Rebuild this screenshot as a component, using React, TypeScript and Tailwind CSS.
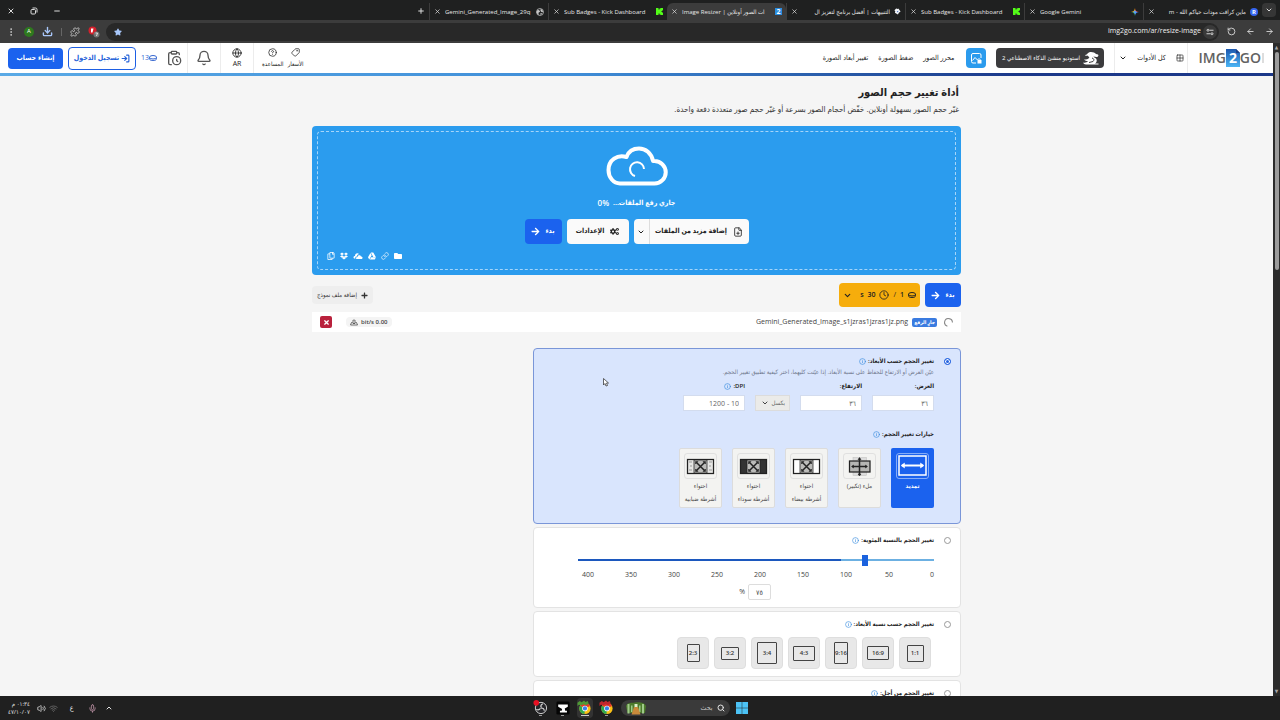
import React from 'react';
import {
  ArrowLeft,
  ArrowRight,
  Bell,
  ChevronDown,
  ChevronUp,
  CircleHelp,
  ClipboardClock,
  Clock,
  Download,
  EllipsisVertical,
  FilePlus,
  Globe,
  Grid2x2,
  Info,
  Link,
  LogIn,
  Mic,
  Minus,
  Plus,
  Puzzle,
  RotateCw,
  Search,
  Tag,
  Volume2,
  Wifi,
  X,
} from 'lucide-react';
import {
  FaArrowRight,
  FaCogs,
  FaDropbox,
  FaFolder,
  FaGoogleDrive,
  FaPlus,
  FaRegCopy,
  FaStar,
  FaTimes,
} from 'react-icons/fa';

/* ---------- small drawings ---------- */

const KickIcon = () => (
  <svg viewBox="0 0 14 14" className="size-[7px]" fill="#53fc18">
    <path d="M0 0h5v3h2V1h2V0h5v5h-2v1h-1v2h1v1h2v5H9v-1H7v-2H5v3H0z" />
  </svg>
);

const GeminiIcon = () => (
  <svg viewBox="0 0 16 16" className="size-2">
    <path d="M8 0c.7 5 2 7 8 8H8z" fill="#ea4335" />
    <path d="M16 8c-6 1-7 3-8 8V8z" fill="#4285f4" />
    <path d="M8 16C7 11 6 9 0 8h8z" fill="#34a853" />
    <path d="M0 8c6-1 7-3 8-8v8z" fill="#fbbc04" />
    <circle cx="8" cy="8" r="3" fill="#5b9cf5" />
  </svg>
);

const RIcon = () => (
  <span className="grid size-2 place-items-center rounded-full bg-[#3565f0] text-[6px] font-bold leading-none text-white">R</span>
);

const TwoIcon = () => (
  <span className="grid size-[7px] place-items-center bg-[#2b8de0] text-[7px] font-bold leading-none text-white">2</span>
);

const BoltIcon = () => (
  <svg viewBox="0 0 16 16" className="size-[7px]">
    <path d="M5 1l4 1 1-1 5 7-4 3-2 4-7-4 1-3-2-3z" fill="#f2f4f8" />
    <path d="M6 8l4-2-1 4z" fill="#3f68b8" />
  </svg>
);

const GlobeDisc = () => (
  <svg viewBox="0 0 16 16" className="size-2">
    <circle cx="8" cy="8" r="7" fill="none" stroke="#c6c6c6" strokeWidth="1.500" />
    <path d="M3 4c3 0 5 1 5 3s-3 1-3 3 1 3 0 4C2 12 1 9 1 8zM9 2c3 0 5 3 5 6-3 1-4-1-5-2s1-2 0-4zM9 10c2 0 3 1 3 2l-3 2z" fill="#c6c6c6" />
  </svg>
);

const CloudIcon = () => (
  <svg viewBox="0 0 62 40" className="h-10 w-[62px]" fill="none" stroke="#fff">
    <path d="M14 37.500h34.500a11 11 0 0 0 0-22.500h-1.500C45.500 7 39.500 2.500 33 2.500c-6 0-10.500 3-12.500 8.500-9-3-18 3-18 13 0 7.500 5 13.500 11.500 13.500z" strokeWidth="4" strokeLinejoin="round" />
    <path d="M38 23a7 7 0 1 0-9 7" strokeWidth="2" />
  </svg>
);

const SpinnerIcon = () => (
  <svg viewBox="0 0 16 16" className="size-[9px]" fill="none" stroke="#8a8a8a" strokeWidth="2">
    <path d="M15 8A7 7 0 1 0 6 14.700" />
  </svg>
);

const CoinIcon = () => (
  <svg viewBox="0 0 16 12" className="h-[6px] w-2" fill="none" stroke="currentColor" strokeWidth="2">
    <ellipse cx="8" cy="4.500" rx="7" ry="3.500" />
    <path d="M1 4.500v3C1 12.500 15 12.500 15 7.500v-3" />
  </svg>
);

const DinoIcon = () => (
  <svg viewBox="0 0 32 26" className="h-[13px] w-4 shrink-0" fill="#fff">
    <path d="M12 1c4-2 12 0 14 3l4 1c2 2 0 5-3 5l-6-1c0 2 3 2 5 4 3 4 1 8-2 10h7v2H6c-3 0-5-2-6-4 4 1 8 0 10-3-3 0-6-1-8-3 5 0 8 0 10-3 2-2-2-3-3-5-2 1-4 1-5-1 4 0 5-4 8-5z" />
    <path d="M18 12c4 1 5 4 2 7l-8 2" fill="none" stroke="#3c3c3c" strokeWidth="2" />
  </svg>
);

const EditorIcon = () => (
  <svg viewBox="0 0 22 22" className="size-[11px]" fill="none" stroke="#fff" strokeWidth="2">
    <path d="M10 20H4a3 3 0 0 1-3-3V4a3 3 0 0 1 3-3h13a3 3 0 0 1 3 3v6" />
    <path d="M3 15l5-6 5 5 3-3 3 3" />
    <rect x="13" y="14" width="8" height="7" fill="#fff" stroke="none" />
  </svg>
);

const OnedriveIcon = () => (
  <svg viewBox="0 0 20 12" className="h-[6px] w-[10px]" fill="currentColor">
    <path d="M1 9C1 7 2 6 4 6c0-4 3-6 6-5 1 0 2 1 3 2-3-1-5 1-5 4-3 0-4 2-3 4H3c-1 0-2-1-2-2z" />
    <path d="M7 12c-2-1-1-4 2-4 0-4 6-5 7-1 4 0 4 5 1 5z" />
  </svg>
);

const WeightIcon = () => (
  <svg viewBox="0 0 16 14" className="h-[7px] w-2" fill="none" stroke="#444" strokeWidth="1.500">
    <path d="M1 12l2-5h2l1 2h4l1-2h2l2 5zM5 5a3 3 0 1 1 6 0M8 4v6" />
  </svg>
);

const PdfIcon = () => (
  <svg viewBox="0 0 24 24" className="size-3">
    <circle cx="9" cy="9" r="8" fill="#d3202c" />
    <path d="M6 5h5l-2 8H6z" fill="#fff" />
    <circle cx="17" cy="17" r="6" fill="#757575" />
    <path d="M15 14h4l-2 6" fill="none" stroke="#fff" strokeWidth="1.500" />
  </svg>
);

const ChromeIcon = ({ hat }: { hat: string }) => (
  <svg viewBox="0 0 32 32" className="size-[15px]">
    <circle cx="17" cy="18" r="12" fill="#fbc116" />
    <path d="M17 18L6.500 12A12 12 0 0 1 28 13z" fill="#e33b2e" />
    <path d="M17 18L6.500 12A12 12 0 0 0 16 30z" fill="#2da94f" />
    <circle cx="17" cy="18" r="6" fill="#fff" />
    <circle cx="17" cy="18" r="4.500" fill="#3b7fea" />
    <path d="M1 6l5-4 4 3 5-4 3 3 5-2 2 6-6 3-5-2-5 2-5-1-3 3z" fill={hat} />
  </svg>
);

const ObsIcon = () => (
  <svg viewBox="0 0 32 32" className="size-[15px]">
    <circle cx="17" cy="17" r="12" fill="#26262a" stroke="#d5d5d5" strokeWidth="2" />
    <path d="M17 16c-1-5 1-7 4-8M17 17c5 0 7 3 7 6M16 18c-3 4-6 4-9 2" fill="none" stroke="#d5d5d5" strokeWidth="2.500" />
    <circle cx="7" cy="6" r="6" fill="#e81123" />
  </svg>
);

const AnvilIcon = () => (
  <svg viewBox="0 0 32 32" className="size-[14px]">
    <rect x="1" y="1" width="30" height="30" rx="3" fill="#050505" />
    <path d="M5 8h22v5l-7 4 1 5h4v4H9v-4h4l1-4-9-5z" fill="#fff" />
  </svg>
);

const BridgeIcon = () => (
  <svg viewBox="0 0 44 28" className="h-[14px] w-[22px]">
    <path d="M2 10C5 2 14 4 20 3s18-2 22 7l-2 14H5z" fill="#4c7a2b" />
    <path d="M5 6h4v19H5zM34 6h4v19h-4zM12 9h3v13h-3zM28 9h3v13h-3z" fill="#9fc98a" />
    <path d="M18 12h8l5 15H13z" fill="#c98a3b" />
    <path d="M19 6h6v6h-6z" fill="#dff0c8" />
  </svg>
);

const WindowsIcon = () => (
  <svg viewBox="0 0 24 24" className="size-3" fill="#4cc2f5">
    <path d="M0 0h11.500v11.500H0zM12.500 0H24v11.500H12.500zM0 12.500h11.500V24H0zM12.500 12.500H24V24H12.500z" />
  </svg>
);

/* ---------- browser chrome ---------- */

interface TabData {
  title: string;
  ltr?: boolean;
  icon: React.ReactNode;
  active?: boolean;
}

const tabs: TabData[] = [
  { title: 'ماين كرافت مودات حياكم الله - m', icon: <RIcon /> },
  { title: 'Google Gemini', ltr: true, icon: <GeminiIcon /> },
  { title: 'Sub Badges - Kick Dashboard', ltr: true, icon: <KickIcon /> },
  { title: 'التنبيهات | أفضل برنامج لتعزيز ال', icon: <BoltIcon /> },
  { title: 'Image Resizer | ات الصور أونلاين', ltr: true, icon: <TwoIcon />, active: true },
  { title: 'Sub Badges - Kick Dashboard', ltr: true, icon: <KickIcon /> },
  { title: 'Gemini_Generated_Image_29q', ltr: true, icon: <GlobeDisc /> },
];

const BrowserTab = ({ title, ltr, icon, active }: TabData) => (
  <div
    className={
      active
        ? 'flex h-[17px] w-[119px] items-center gap-1 rounded-t-md bg-[#3c3c3c] px-1'
        : 'flex h-[17px] w-[119px] items-center gap-1 border-l border-[#3c3c3c] px-1'
    }
  >
    {icon}
    <span dir={ltr ? 'ltr' : 'rtl'} className="min-w-0 flex-1 overflow-hidden whitespace-nowrap text-[6px] leading-3 text-[#e6e6e6]">
      {title}
    </span>
    <button aria-label="إغلاق" className="shrink-0"><X className="size-[7px] text-[#dcdcdc]" strokeWidth={2.5} /></button>
  </div>
);

const TitleBar = () => (
  <div className="flex h-5 shrink-0 items-end bg-[#1f2020] text-[#dcdcdc]">
    <button aria-label="البحث في علامات التبويب" className="mr-1 mb-[3px] grid size-[14px] place-items-center rounded bg-[#363636]">
      <ChevronDown className="size-2" strokeWidth={3} />
    </button>
    <div className="flex">
      {tabs.map((tab, i) => <BrowserTab key={i} {...tab} />)}
    </div>
    <button aria-label="علامة تبويب جديدة" className="mr-1 mb-[5px]"><Plus className="size-2" strokeWidth={3} /></button>
    <div className="mr-auto mb-[5px] ml-[7px] flex gap-[15px]">
      <button aria-label="تصغير"><Minus className="size-2" strokeWidth={3} /></button>
      <button aria-label="استعادة">
        <svg viewBox="0 0 16 16" className="size-2" fill="none" stroke="currentColor" strokeWidth="2">
          <rect x="2" y="5" width="9" height="9" rx="2" />
          <path d="M5 2h6a3 3 0 0 1 3 3v6" />
        </svg>
      </button>
      <button aria-label="إغلاق النافذة"><X className="size-2" strokeWidth={3} /></button>
    </div>
  </div>
);

const Toolbar = () => (
  <div className="flex h-[23px] shrink-0 items-center bg-[#3c3c3c] px-[6px] text-[#d0d0d0]">
    <div className="ml-2 flex gap-[10px]">
      <button aria-label="رجوع"><ArrowRight className="size-[9px]" strokeWidth={2.5} /></button>
      <button aria-label="التالي"><ArrowLeft className="size-[9px]" strokeWidth={2.5} /></button>
      <button aria-label="إعادة تحميل"><RotateCw className="size-[9px] -scale-x-100" strokeWidth={2.5} /></button>
    </div>
    <div className="flex h-[18px] flex-1 items-center rounded-full bg-[#282828] pr-[2px] pl-2">
      <button aria-label="معلومات الموقع" className="grid size-[14px] place-items-center rounded-full bg-[#3a3a3a]">
        <svg viewBox="0 0 16 16" className="size-2" fill="none" stroke="currentColor" strokeWidth="2">
          <circle cx="4" cy="4.500" r="2" />
          <path d="M7 4.500h8M1 11.500h8" />
          <circle cx="12" cy="11.500" r="2" />
        </svg>
      </button>
      <input dir="ltr" aria-label="العنوان" defaultValue="img2go.com/ar/resize-image" className="mr-[2px] min-w-0 flex-1 bg-transparent text-right text-[7px] text-[#f0f0f0] outline-none" />
      <button aria-label="إشارة مرجعية"><FaStar className="size-2 text-[#a8c7fa]" /></button>
    </div>
    <div className="mr-[6px] flex items-center gap-2">
      <button aria-label="PDF"><PdfIcon /></button>
      <button aria-label="الإضافات"><Puzzle className="size-[10px]" /></button>
      <span className="h-2 w-px bg-[#666]" />
      <button aria-label="التنزيلات"><Download className="size-[11px] text-[#a8c7fa]" strokeWidth={3} /></button>
      <button aria-label="الملف الشخصي" className="grid size-[10px] place-items-center rounded-full bg-[#2e7a1e] text-[6px] text-white">A</button>
      <button aria-label="القائمة"><EllipsisVertical className="size-[10px]" /></button>
    </div>
  </div>
);

/* ---------- site ---------- */

const Logo = () => (
  <a href="#" dir="ltr" className="flex items-center text-[14px] leading-none font-semibold text-[#626262]">
    IMG
    <svg viewBox="0 0 28 36" className="h-[18px] w-[14px]">
      <defs>
        <linearGradient id="two" x1="0" y1="0" x2="0" y2="1">
          <stop offset="0" stopColor="#1b57ae" />
          <stop offset="1" stopColor="#4cb5f5" />
        </linearGradient>
      </defs>
      <path d="M0 0h20l8 8v28H0z" fill="url(#two)" />
      <path d="M20 0l8 8h-8z" fill="#1b3f88" />
      <text x="14" y="28" textAnchor="middle" fontSize="28" fontWeight="700" fill="#fff">2</text>
    </svg>
    GO
    <span className="ml-px h-[10px] w-[2px] bg-[#ddd]" />
  </a>
);

const SiteHeader = () => (
  <header className="shrink-0">
    <div className="flex h-[30px] items-center bg-white pr-[9px] pl-2 text-[7px] text-[#222]">
      <Logo />
      <a href="#" className="mr-[10px] flex h-[30px] w-[74px] items-center justify-center gap-[10px] border-x border-[#ececec]">
        <Grid2x2 className="size-2" />
        كل الأدوات
        <ChevronDown className="size-2" strokeWidth={3} />
      </a>
      <button className="mr-[10px] flex h-5 w-[108px] items-center justify-center gap-[3px] rounded-sm bg-[#3b3b3d] text-[6px] font-medium whitespace-nowrap text-white">
        <DinoIcon />
        استوديو منشئ الذكاء الاصطناعي 2
      </button>
      <button aria-label="المحرر" className="mr-[10px] grid size-5 place-items-center rounded-sm bg-[#2b9bed]"><EditorIcon /></button>
      <nav className="mr-3 flex gap-[10px]">
        <a href="#">محرر الصور</a>
        <a href="#">ضغط الصورة</a>
        <a href="#">تغيير أبعاد الصورة</a>
      </nav>
      <div className="mr-auto flex h-[30px] items-center">
        <a href="#" className="flex flex-col items-center gap-[3px] text-[6px] leading-[8px]"><Tag className="size-[9px] scale-x-[-1]" />الأسعار</a>
        <a href="#" className="mr-1 flex flex-col items-center gap-[3px] text-[6px] leading-[8px]"><CircleHelp className="size-[9px]" />المساعدة</a>
        <button className="mr-2 flex h-[30px] w-[34px] flex-col items-center justify-center gap-[2px] border-x border-[#ececec] leading-[8px]"><Globe className="size-[10px]" />AR</button>
        <button aria-label="الإشعارات" className="grid w-8 place-items-center"><Bell className="size-4 text-[#555]" strokeWidth={2} /></button>
        <button aria-label="السجل" className="grid h-[30px] w-[27px] place-items-center border-r border-[#ececec]"><ClipboardClock className="size-4 text-[#555]" strokeWidth={2} /></button>
        <span dir="ltr" className="mr-1 flex items-center text-[7px] text-[#3566cf]">13<CoinIcon /></span>
        <button className="mr-[5px] flex h-[23px] w-[68px] items-center justify-center gap-[2px] rounded-sm border border-[#1d5fe4] font-bold text-[#2461d8]">
          <LogIn className="size-[9px]" strokeWidth={3} />
          تسجيل الدخول
        </button>
        <button className="mr-[5px] h-[21px] w-[55px] rounded-sm bg-[#1b62ee] font-bold text-white">إنشاء حساب</button>
      </div>
    </div>
    <div className="h-[3px] bg-linear-to-r from-[#5aaae6] via-[#3f8ed8] via-45% to-[#1c3889] to-80%" />
  </header>
);

const UploadBox = () => (
  <section className="mt-[9px] rounded bg-[#2b9cee] p-[5px] text-white">
    <div className="flex h-[139px] flex-col items-center rounded-sm border border-dashed border-[#a5d5f9] px-[9px] pt-[14px]">
      <CloudIcon />
      <p className="mt-[9px] flex gap-1 text-[7px] leading-4 font-semibold">جاري رفع الملفات... <span dir="ltr" className="text-[8px]">0%</span></p>
      <div className="mt-2 flex gap-[5px] text-[7px] font-bold text-[#222]">
        <div className="flex h-[25px] rounded-sm bg-[#fafafa]">
          <button className="flex w-[99px] items-center justify-center gap-[6px]">
            <FilePlus className="size-[10px]" />
            إضافة مزيد من الملفات
          </button>
          <button aria-label="مصادر أخرى" className="grid w-4 place-items-center border-r border-[#ddd]"><ChevronDown className="size-2" strokeWidth={3} /></button>
        </div>
        <button className="flex h-[25px] w-[62px] items-center justify-center gap-[6px] rounded-sm bg-[#fafafa]">
          <FaCogs className="size-[9px]" />
          الإعدادات
        </button>
        <button className="flex h-[25px] w-[37px] items-center justify-center gap-[5px] rounded-sm bg-[#1b62ee] text-white">
          بدء
          <FaArrowRight className="size-[9px]" />
        </button>
      </div>
      <div className="mt-2 mr-auto flex items-center gap-[5px]">
        <FaFolder className="size-2" />
        <Link className="size-2" />
        <FaGoogleDrive className="size-2" />
        <OnedriveIcon />
        <FaDropbox className="size-2" />
        <FaRegCopy className="size-2" />
      </div>
    </div>
  </section>
);

const QueueBar = () => (
  <div className="mt-2 flex items-center gap-[5px] text-[7px]">
    <button className="flex h-6 w-9 items-center justify-center gap-[5px] rounded-sm bg-[#1b62ee] text-[7px] font-bold text-white">
      بدء
      <FaArrowRight className="size-[9px]" />
    </button>
    <button className="flex h-6 w-[81px] items-center gap-1 rounded-sm bg-[#f6ad0c] px-1 text-[#222]">
      <CoinIcon />
      <span className="font-semibold">1</span>
      <span>/</span>
      <Clock className="size-[10px]" />
      <span dir="ltr" className="font-semibold whitespace-pre">s  30</span>
      <ChevronDown className="mr-auto size-[9px]" strokeWidth={3} />
    </button>
    <button className="mr-auto flex h-[18px] items-center gap-1 rounded-sm bg-[#eeeeee] px-[5px] text-[6px] text-[#333]">
      <FaPlus className="size-[7px]" />
      إضافة ملف نموذج
    </button>
  </div>
);

const FileRow = () => (
  <div className="mt-[5px] flex h-5 items-center bg-white px-2 text-[7px] text-[#444]">
    <SpinnerIcon />
    <span className="mr-[7px] flex h-[9px] items-center rounded-[2px] bg-[#3a7be0] px-[2px] text-[5px] leading-none font-bold text-white">جارٍ الرفع</span>
    <span dir="ltr" className="mr-1">Gemini_Generated_Image_s1jzras1jzras1jz.png</span>
    <span dir="ltr" className="mr-auto flex h-[10px] items-center gap-[3px] rounded-sm bg-[#f4f4f4] px-1 text-[6px] font-semibold text-[#444]">
      <WeightIcon />
      bit/s 0.00
    </span>
    <button aria-label="حذف" className="mr-[14px] grid size-3 place-items-center rounded-[2px] bg-[#b9213c]"><FaTimes className="size-[7px] text-white" /></button>
  </div>
);

const fitTiles = [
  { lines: ['ملء (تكبير)'], kind: 'fill' },
  { lines: ['احتواء', 'أشرطة بيضاء'], kind: 'white' },
  { lines: ['احتواء', 'أشرطة سوداء'], kind: 'black' },
  { lines: ['احتواء', 'أشرطة ضبابية'], kind: 'blur' },
];

const FitIcon = ({ kind }: { kind: string }) => (
  <svg viewBox="0 0 66 52" className="h-[26px] w-[33px]" fill="none">
    <rect x="1" y="1" width="64" height="50" rx="5" fill={kind === 'stretch' ? 'none' : '#f3f3f1'} stroke={kind === 'stretch' ? '#a9c5fa' : '#dadada'} strokeWidth="1.500" />
    {kind === 'stretch' && (
      <g stroke="#fff" strokeWidth="3">
        <rect x="6" y="6" width="54" height="38" />
        <path d="M12 25h42" strokeWidth="4" />
        <path d="M10 25l7-5v10zM56 25l-7-5v10z" fill="#fff" strokeWidth="1" />
      </g>
    )}
    {kind === 'fill' && (
      <g stroke="#222">
        <rect x="20" y="9" width="27" height="36" fill="#ddd" stroke="#bbb" />
        <rect x="13" y="16" width="41" height="22" fill="#b5b5b3" strokeWidth="2.500" />
        <path d="M33 12v32M19 27h28" strokeWidth="3" />
        <path d="M33 9l3 4h-6zM33 46l3-4h-6zM17 27l4-3v6zM49 27l-4-3v6z" fill="#222" strokeWidth="1" />
      </g>
    )}
    {kind !== 'stretch' && kind !== 'fill' && (
      <g stroke="#222">
        <rect x="7" y="13" width="52" height="28" fill={kind === 'black' ? '#333' : kind === 'white' ? '#fff' : '#e6e6e4'} strokeWidth="2.500" />
        {kind === 'blur' && <path d="M10 18h6M12 26h4M10 34h6M50 18h6M50 26h4M50 34h6" stroke="#999" strokeWidth="2" />}
        <rect x="20" y="14" width="26" height="26" fill="#bcbcba" strokeWidth="1.500" />
        <path d="M25 19l16 16M41 19L25 35" strokeWidth="3" />
        <path d="M23 17h5l-5 5zM43 17h-5l5 5zM43 37h-5l5-5zM23 37h5l-5-5z" fill="#222" strokeWidth="1" />
      </g>
    )}
  </svg>
);

const RadioHead = ({ id, label, checked }: { id: string; label: string; checked?: boolean }) => (
  <div className="flex h-3 items-center">
    <input
      type="radio"
      name="mode"
      id={id}
      defaultChecked={checked}
      className="ml-[10px] size-[7px] appearance-none rounded-full border border-[#999] bg-white checked:border-[#2463e0] checked:bg-[#2463e0] checked:ring-1 checked:ring-white checked:ring-inset"
    />
    <label htmlFor={id} className="text-[6px] font-semibold text-[#222]">{label}</label>
    <Info className="mr-[2px] size-[7px] text-[#2f86dd]" />
  </div>
);

const Field = ({ id, label, placeholder, info }: { id: string; label: string; placeholder: string; info?: boolean }) => (
  <div className="w-[62px]">
    <div className="flex h-3 items-center">
      <label htmlFor={id} className="text-[6px] font-semibold text-[#222]">{label}</label>
      {info && <Info className="mr-[2px] size-[7px] text-[#2f86dd]" />}
    </div>
    <input id={id} placeholder={placeholder} className="mt-[3px] block h-4 w-full border border-[#d3dcee] bg-white px-[5px] text-right text-[7px] text-[#555] placeholder:text-[#666]" />
  </div>
);

const SizePanel = () => (
  <section className="h-[176px] rounded-sm border border-[#7a96d8] bg-[#d9e5fd] px-[9px] pt-[6px]">
    <RadioHead id="by-size" label="تغيير الحجم حسب الأبعاد:" checked />
    <div className="pr-[17px]">
      <p className="text-[6px] leading-[10px] text-[#6f778c]">عيّن العرض أو الارتفاع للحفاظ على نسبة الأبعاد. إذا عيّنت كليهما، اختر كيفية تطبيق تغيير الحجم.</p>
      <div className="mt-[3px] flex items-end gap-[10px]">
        <Field id="width" label="العرض:" placeholder="٣٦" />
        <Field id="height" label="الارتفاع:" placeholder="٣٦" />
        <div className="flex h-4 w-[35px] items-center border border-[#dcdcdc] bg-[#ebebe9]">
          <select aria-label="الوحدة" className="h-full min-w-0 flex-1 appearance-none bg-transparent pr-[4px] text-[6px] text-[#666]">
            <option>بكسل</option>
          </select>
          <ChevronDown className="ml-[5px] size-2 text-[#444]" strokeWidth={3} />
        </div>
        <Field id="dpi" label="DPI:" placeholder="10 - 1200" info />
      </div>
      <div className="mt-[17px] flex h-3 items-center text-[6px] font-semibold text-[#222]">
        خيارات تغيير الحجم:
        <Info className="mr-[2px] size-[7px] text-[#2f86dd]" />
      </div>
      <div className="mt-2 flex gap-[10px] text-[6px] leading-3">
        <button className="flex h-[60px] w-[43px] flex-col items-center rounded-[2px] bg-[#1b62ee] pt-[5px] font-bold text-white">
          <FitIcon kind="stretch" />
          <span className="mt-px">تمديد</span>
        </button>
        {fitTiles.map((tile) => (
          <button key={tile.kind} className="flex h-[60px] w-[43px] flex-col items-center rounded-[2px] border border-[#dcdcdc] bg-[#f3f3f1] pt-1 whitespace-nowrap text-[#444]">
            <FitIcon kind={tile.kind} />
            {tile.lines.map((line) => <span key={line} className="mt-px">{line}</span>)}
          </button>
        ))}
      </div>
    </div>
  </section>
);

const PercentPanel = () => (
  <section className="mt-[3px] h-[81px] rounded-sm border border-[#e3e3e3] bg-white px-[9px] pt-[6px] text-[#444]">
    <RadioHead id="by-percent" label="تغيير الحجم بالنسبة المئوية:" />
    <div className="w-[373px] pr-[17px]">
      <input
        type="range"
        aria-label="النسبة المئوية"
        min={0}
        max={400}
        defaultValue={75}
        className="mt-[13px] block h-[2px] w-full appearance-none bg-linear-to-l from-[#6cb0e2] from-26% to-[#1c58be] to-26% [&::-webkit-slider-thumb]:h-[11px] [&::-webkit-slider-thumb]:w-[6px] [&::-webkit-slider-thumb]:appearance-none [&::-webkit-slider-thumb]:bg-[#1b62de]"
      />
      <div className="mt-[8px] -mr-1 flex justify-between pl-1 text-[7px] leading-3">
        {[0, 50, 100, 150, 200, 250, 300, 350, 400].map((n) => <span key={n} className="w-3 text-center">{n}</span>)}
      </div>
    </div>
    <div className="mt-[3px] flex items-center gap-[3px] pr-[180px] text-[7px]">
      <input aria-label="القيمة" defaultValue="٧٥" className="h-4 w-[23px] rounded-[2px] border border-[#ddd] text-center text-[7px]" />
      %
    </div>
  </section>
);

const ratios = [
  { text: '1:1', box: 'h-[17px] w-[17px]' },
  { text: '16:9', box: 'h-[14px] w-[22px]' },
  { text: '9:16', box: 'h-[22px] w-[14px]' },
  { text: '4:3', box: 'h-[15px] w-[22px]' },
  { text: '3:4', box: 'h-[22px] w-[20px]' },
  { text: '3:2', box: 'h-[13px] w-[18px]' },
  { text: '2:3', box: 'h-[18px] w-[13px]' },
];

const RatioPanel = () => (
  <section className="mt-[3px] h-[66px] rounded-sm border border-[#e3e3e3] bg-white px-[9px] pt-[6px]">
    <RadioHead id="by-ratio" label="تغيير الحجم حسب نسبة الأبعاد:" />
    <div className="mt-[7px] flex gap-[5px] pr-5">
      {ratios.map((r) => (
        <button key={r.text} className="grid size-8 place-items-center rounded-sm border border-[#dedede] bg-[#e8e8e8]">
          <span dir="ltr" className={`${r.box} flex items-center justify-center rounded-[1px] border border-[#444] text-[6px] leading-none font-semibold text-[#333]`}>{r.text}</span>
        </button>
      ))}
    </div>
  </section>
);

const Scrollbar = () => (
  <div className="flex w-[7px] shrink-0 flex-col items-center bg-[#2b2b2b]">
    <span className="grid h-[9px] place-items-center text-[5px] leading-none text-[#a5a5a5]">▲</span>
    <span className="h-1/3 w-1 rounded-full bg-[#9c9c9c]" />
    <span className="mt-auto grid h-[9px] place-items-center text-[5px] leading-none text-[#a5a5a5]">▼</span>
  </div>
);

const Taskbar = () => (
  <footer className="flex h-6 shrink-0 items-center bg-[#202020] px-2 text-[#e4e4e4]">
    <div className="flex-1" />
    <div className="flex items-center gap-[6px]">
      <button aria-label="ابدأ"><WindowsIcon /></button>
      <label className="flex h-4 w-[109px] items-center rounded-full bg-[#3a3a3a] pr-[5px] pl-1">
        <Search className="size-2" strokeWidth={3} />
        <input aria-label="بحث" placeholder="بحث" className="mr-1 min-w-0 flex-1 bg-transparent text-[7px] placeholder:text-[#c4c4c4]" />
        <BridgeIcon />
      </label>
      <button aria-label="Chrome" className="flex w-4 flex-col items-center"><ChromeIcon hat="#c1272d" /><span className="h-px w-[3px] bg-[#999]" /></button>
      <button aria-label="Chrome 2" className="flex h-5 w-4 flex-col items-center justify-center rounded bg-[#333]"><ChromeIcon hat="#4f9a35" /><span className="h-px w-2 bg-[#ccc]" /></button>
      <button aria-label="Editor" className="flex w-4 flex-col items-center"><AnvilIcon /><span className="h-px w-[3px] bg-[#999]" /></button>
      <button aria-label="OBS" className="flex w-4 flex-col items-center"><ObsIcon /><span className="h-px w-[3px] bg-[#999]" /></button>
    </div>
    <div className="flex flex-1 items-center justify-end">
      <ChevronUp className="size-2" strokeWidth={3} />
      <Mic className="mr-2 size-[9px] text-[#c89aae]" />
      <span className="mr-[14px] text-[7px]">ع</span>
      <Wifi className="mr-3 size-[9px] text-[#777]" />
      <Volume2 className="mr-[3px] size-[9px]" />
      <div className="mr-[7px] text-[6px] leading-2"><div>٠١:٣٤ م</div><div>٤٧/١٠/٠٧</div></div>
    </div>
  </footer>
);

const App: React.FC = () => (
  <div dir="rtl" className="flex h-screen flex-col overflow-hidden bg-[#202020] font-['Open_Sans','DejaVu_Sans_Condensed','DejaVu_Sans',sans-serif]">
    <TitleBar />
    <Toolbar />
    <div className="flex min-h-0 flex-1">
      <Scrollbar />
      <div className="flex min-w-0 flex-1 flex-col overflow-hidden bg-[#f5f5f5]">
        <SiteHeader />
        <main className="relative mx-auto w-full max-w-[649px] pt-2">
          <h1 className="px-[2px] text-[11px] leading-4 font-semibold text-[#222]">أداة تغيير حجم الصور</h1>
          <p className="mt-px px-[2px] text-[8px] leading-4 text-[#333]">غيّر حجم الصور بسهولة أونلاين. خفّض أحجام الصور بسرعة أو غيّر حجم صور متعددة دفعة واحدة.</p>
          <UploadBox />
          <QueueBar />
          <FileRow />
          <form className="mt-4 max-w-[428px]">
            <SizePanel />
            <PercentPanel />
            <RatioPanel />
            <section className="mt-[3px] h-[66px] rounded-sm border border-[#e3e3e3] bg-white px-[9px] pt-[6px]">
              <RadioHead id="by-target" label="تغيير الحجم من أجل:" />
            </section>
          </form>
          <svg viewBox="0 0 12 18" className="absolute top-[302px] left-[291px] h-[9px] w-[6px]" fill="#fff" stroke="#333" strokeWidth="1.500">
            <path d="M1 1v13l3-3 2 5 3-1-2-5h4z" />
          </svg>
        </main>
      </div>
    </div>
    <Taskbar />
  </div>
);

export default App;
